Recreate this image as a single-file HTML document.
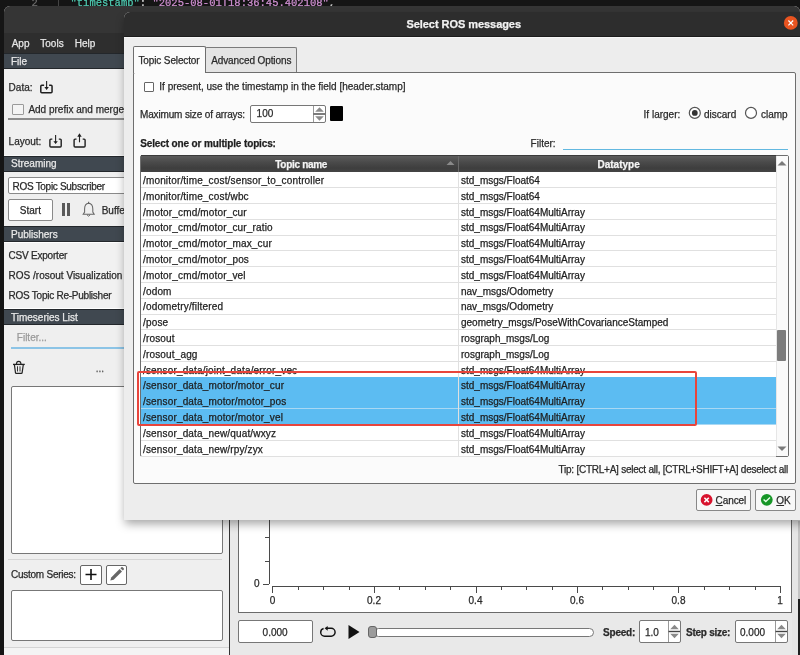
<!DOCTYPE html>
<html><head><meta charset="utf-8"><style>
html,body{margin:0;padding:0;width:800px;height:655px;overflow:hidden;background:#151515}
.a{position:absolute}
.t{position:absolute;white-space:pre;line-height:1;font-family:"Liberation Sans",sans-serif;-webkit-text-stroke:0.25px currentColor}
.mono{font-family:"Liberation Mono",monospace}
</style></head><body><div style="position:absolute;left:0;top:0;width:800px;height:655px;overflow:hidden;filter:blur(0.3px)">
<div class="a" style="left:0px;top:0px;width:800px;height:655px;background:#151515"></div>
<div class="t mono" style="left:31.5px;top:-2.5px;font-size:10.5px;color:#6e6e6e">2</div>
<div class="a" style="left:58px;top:0px;width:1px;height:6px;background:#444"></div>
<div class="t mono" style="left:70.5px;top:-2.5px;font-size:10.5px;color:#d4d4d4"><span style="color:#4ec9b0">"timestamp"</span>: <span style="color:#ce8fd0">"2025-08-01T18:36:45.402108"</span>,</div>
<div class="a" style="left:4px;top:6px;width:796px;height:649px;background:#efefef;border-radius:6px 6px 0 0;overflow:hidden"></div>
<div class="a" style="left:4px;top:6px;width:796px;height:27px;background:#353535;border-radius:6px 6px 0 0"></div>
<div class="a" style="left:4px;top:33px;width:796px;height:20px;background:#2e2e2e"></div>
<div class="t" style="left:11.7px;top:38.53px;font-size:10px;color:#e6e6e6">App</div>
<div class="t" style="left:40.3px;top:38.53px;font-size:10px;color:#e6e6e6">Tools</div>
<div class="t" style="left:74.7px;top:38.53px;font-size:10px;color:#e6e6e6">Help</div>
<div class="a" style="left:4px;top:52.5px;width:226px;height:16.5px;background:#404850;border-top:1px solid #23272b;border-bottom:1px solid #23272b;box-sizing:border-box"></div>
<div class="t" style="left:11px;top:56.53px;font-size:10px;color:#e8e8e8">File</div>
<div class="t" style="left:8.6px;top:82.53px;font-size:10px;color:#2a2a2a">Data:</div>
<svg class="a" style="left:36px;top:78px" width="20" height="18" viewBox="36 78 20 18"><path d="M44.1 85.35 H41.8 Q40.8 85.35 40.8 86.35 V91.75 Q40.8 92.75 41.8 92.75 H51.05 Q52.05 92.75 52.05 91.75 V86.35 Q52.05 85.35 51.05 85.35 H49.1" fill="none" stroke="#1e1e1e" stroke-width="1.5"/><path d="M46.6 81 V88" stroke="#222" stroke-width="1.1"/><path d="M44.4 87 L46.6 89.9 L48.8 87 Z" fill="#1e1e1e"/></svg>
<div class="a" style="left:12px;top:104px;width:10px;height:9px;border:1px solid #9a9a9a;background:#f4f4f4;border-radius:1px"></div>
<div class="t" style="left:28.4px;top:104.53px;font-size:10px;color:#2a2a2a">Add prefix and merge</div>
<div class="a" style="left:8px;top:118px;width:222px;height:2px;background:#8c8c8c"></div>
<div class="t" style="left:8.6px;top:136.53px;font-size:10px;color:#2a2a2a">Layout:</div>
<svg class="a" style="left:46px;top:132px" width="20" height="18" viewBox="46 132 20 18"><path d="M52.3 139.1 H50.9 Q49.9 139.1 49.9 140.1 V146 Q49.9 147 50.9 147 H60.2 Q61.2 147 61.2 146 V140.1 Q61.2 139.1 60.2 139.1 H58.8" fill="none" stroke="#1e1e1e" stroke-width="1.4"/><path d="M55.6 135 V142.5" stroke="#222" stroke-width="1.1"/><path d="M53.4 141.2 L55.6 144 L57.8 141.2 Z" fill="#1e1e1e"/></svg>
<svg class="a" style="left:70px;top:131px" width="20" height="19" viewBox="70 131 20 19"><path d="M76.5 139.1 H75.1 Q74.1 139.1 74.1 140.1 V146 Q74.1 147 75.1 147 H84.1 Q85.1 147 85.1 146 V140.1 Q85.1 139.1 84.1 139.1 H82.7" fill="none" stroke="#1e1e1e" stroke-width="1.4"/><path d="M79.5 142.3 V135.5" stroke="#222" stroke-width="1.1"/><path d="M77.3 136.7 L79.5 133.3 L81.7 136.7 Z" fill="#1e1e1e"/></svg>
<div class="a" style="left:4px;top:155px;width:226px;height:16.5px;background:#fafafa"></div>
<div class="a" style="left:4px;top:155.5px;width:226px;height:16px;background:#404850;border-top:1px solid #23272b;border-bottom:1px solid #23272b;box-sizing:border-box"></div>
<div class="t" style="left:11px;top:158.53px;font-size:10px;color:#e8e8e8">Streaming</div>
<div class="a" style="left:8px;top:177px;width:240px;height:17px;background:#fff;border:1px solid #8a8a8a;border-radius:2px;box-sizing:border-box"></div>
<div class="t" style="left:12.6px;top:181.53px;font-size:10px;color:#2a2a2a;letter-spacing:-0.3px">ROS Topic Subscriber</div>
<div class="a" style="left:8px;top:199px;width:45px;height:22px;background:#fff;border:1px solid #8a8a8a;border-radius:2px;box-sizing:border-box"></div>
<div class="t" style="left:19.8px;top:205.53px;font-size:10px;color:#2a2a2a">Start</div>
<div class="a" style="left:62px;top:203px;width:3.2px;height:12.6px;background:#5a5a5a"></div>
<div class="a" style="left:67px;top:203px;width:3.2px;height:12.6px;background:#5a5a5a"></div>
<svg class="a" style="left:80px;top:200px" width="18" height="20" viewBox="80 200 18 20"><path d="M88.6 203.3 C85.6 203.6 84.6 206 84.6 209 V212 L83.2 214.3 H94.2 L92.8 212 V209 C92.8 206 91.8 203.6 88.6 203.3 Z" fill="none" stroke="#666" stroke-width="1.05"/><path d="M88.6 201.8 V203.3" stroke="#666" stroke-width="1.2"/><path d="M87 214.8 Q88.6 217.6 90.2 214.8" fill="none" stroke="#666" stroke-width="1"/></svg>
<div class="t" style="left:101.7px;top:205.53px;font-size:10px;color:#2a2a2a">Buffer</div>
<div class="a" style="left:4px;top:225.5px;width:226px;height:16px;background:#404850;border-top:1px solid #23272b;border-bottom:1px solid #23272b;box-sizing:border-box"></div>
<div class="t" style="left:11px;top:229.53px;font-size:10px;color:#e8e8e8">Publishers</div>
<div class="a" style="left:4px;top:241.5px;width:226px;height:67.5px;background:#f1f1f1;border-top:1px solid #fff;border-bottom:1.5px solid #fff;box-sizing:border-box"></div>
<div class="t" style="left:8.4px;top:250.53px;font-size:10px;color:#2a2a2a;letter-spacing:-0.2px">CSV Exporter</div>
<div class="t" style="left:8.6px;top:270.54px;font-size:10px;color:#2a2a2a">ROS /rosout Visualization</div>
<div class="t" style="left:8.6px;top:290.54px;font-size:10px;color:#2a2a2a;letter-spacing:-0.25px">ROS Topic Re-Publisher</div>
<div class="a" style="left:4px;top:308.5px;width:226px;height:16.5px;background:#404850;border-top:1px solid #23272b;border-bottom:1px solid #23272b;box-sizing:border-box"></div>
<div class="t" style="left:11px;top:312.54px;font-size:10px;color:#e8e8e8">Timeseries List</div>
<div class="t" style="left:16.8px;top:332.54px;font-size:10px;color:#9a9a9a">Filter...</div>
<div class="a" style="left:10.5px;top:347px;width:212px;height:2px;background:#8cc4e6"></div>
<svg class="a" style="left:10px;top:358px" width="18" height="18" viewBox="10 358 18 18"><path d="M13 364.4 H24.8" stroke="#222" stroke-width="1.3"/><path d="M16.4 364.3 Q16.5 361.4 18.7 361.4 Q20.9 361.4 21 364.3" fill="none" stroke="#222" stroke-width="1.1"/><path d="M14.4 364.6 L15.5 372.9 Q15.6 373.4 16.2 373.4 H21.4 Q22 373.4 22.1 372.9 L23.3 364.6" fill="none" stroke="#222" stroke-width="1.2"/><path d="M17.5 366.3 V371.5 M20 366.3 V371.5" stroke="#333" stroke-width="1"/></svg>
<div class="t" style="left:95.8px;top:363.54px;font-size:10px;color:#555">...</div>
<div class="a" style="left:10.5px;top:386px;width:212px;height:167.5px;background:#fff;border:1px solid #777;border-radius:2px;box-sizing:border-box"></div>
<div class="a" style="left:8px;top:558.5px;width:214px;height:1.5px;background:#d6d6d6"></div>
<div class="t" style="left:11px;top:569.53px;font-size:10px;color:#2a2a2a;letter-spacing:-0.25px">Custom Series:</div>
<div class="a" style="left:80px;top:564.5px;width:21.5px;height:20px;background:#fff;border:1px solid #666;border-radius:2px;box-sizing:border-box"></div>
<svg class="a" style="left:84px;top:568px" width="14" height="13" viewBox="0 0 14 13"><path d="M7 1 V12 M1.5 6.5 H12.5" stroke="#111" stroke-width="1.6"/></svg>
<div class="a" style="left:106px;top:564.5px;width:21px;height:20px;background:#fff;border:1px solid #666;border-radius:2px;box-sizing:border-box"></div>
<svg class="a" style="left:106px;top:564px" width="21" height="21" viewBox="0 0 21 21"><path d="M4.3 16.6 L5.2 13.4 L13.6 5 L16 7.4 L7.6 15.8 Z" fill="#666"/><path d="M14.4 4.2 L15.3 3.3 Q16 2.7 16.7 3.3 L17.7 4.3 Q18.3 5 17.7 5.7 L16.8 6.6 Z" fill="#666"/></svg>
<div class="a" style="left:10.5px;top:589.5px;width:212px;height:51px;background:#fff;border:1px solid #777;border-radius:2px;box-sizing:border-box"></div>
<div class="a" style="left:4px;top:647px;width:225px;height:1px;background:#d4d4d4"></div>
<div class="a" style="left:4px;top:648px;width:225px;height:7px;background:#f4f4f4"></div>
<div class="a" style="left:229px;top:53px;width:1px;height:602px;background:#333"></div>
<div class="a" style="left:230px;top:53px;width:570px;height:602px;background:#e9e9e9"></div>
<div class="a" style="left:237.5px;top:53px;width:554.5px;height:560px;background:#fff;border:1px solid #6a6a6a;box-sizing:border-box"></div>
<div class="a" style="left:269px;top:53px;width:1px;height:531px;background:#4a4a4a"></div>
<div class="a" style="left:265px;top:537px;width:4px;height:1px;background:#4a4a4a"></div>
<div class="a" style="left:265px;top:561px;width:4px;height:1px;background:#4a4a4a"></div>
<div class="a" style="left:263px;top:584px;width:6px;height:1px;background:#4a4a4a"></div>
<div class="t" style="left:254px;top:578.53px;font-size:10px;color:#2a2a2a">0</div>
<div class="a" style="left:272px;top:586px;width:508px;height:1px;background:#4a4a4a"></div>
<div class="a" style="left:272px;top:586px;width:1px;height:7px;background:#4a4a4a"></div>
<div class="a" style="left:298px;top:586px;width:1px;height:4px;background:#4a4a4a"></div>
<div class="a" style="left:323px;top:586px;width:1px;height:4px;background:#4a4a4a"></div>
<div class="a" style="left:349px;top:586px;width:1px;height:4px;background:#4a4a4a"></div>
<div class="a" style="left:374px;top:586px;width:1px;height:7px;background:#4a4a4a"></div>
<div class="a" style="left:399px;top:586px;width:1px;height:4px;background:#4a4a4a"></div>
<div class="a" style="left:425px;top:586px;width:1px;height:4px;background:#4a4a4a"></div>
<div class="a" style="left:450px;top:586px;width:1px;height:4px;background:#4a4a4a"></div>
<div class="a" style="left:476px;top:586px;width:1px;height:7px;background:#4a4a4a"></div>
<div class="a" style="left:501px;top:586px;width:1px;height:4px;background:#4a4a4a"></div>
<div class="a" style="left:526px;top:586px;width:1px;height:4px;background:#4a4a4a"></div>
<div class="a" style="left:552px;top:586px;width:1px;height:4px;background:#4a4a4a"></div>
<div class="a" style="left:577px;top:586px;width:1px;height:7px;background:#4a4a4a"></div>
<div class="a" style="left:602px;top:586px;width:1px;height:4px;background:#4a4a4a"></div>
<div class="a" style="left:628px;top:586px;width:1px;height:4px;background:#4a4a4a"></div>
<div class="a" style="left:653px;top:586px;width:1px;height:4px;background:#4a4a4a"></div>
<div class="a" style="left:678px;top:586px;width:1px;height:7px;background:#4a4a4a"></div>
<div class="a" style="left:704px;top:586px;width:1px;height:4px;background:#4a4a4a"></div>
<div class="a" style="left:729px;top:586px;width:1px;height:4px;background:#4a4a4a"></div>
<div class="a" style="left:755px;top:586px;width:1px;height:4px;background:#4a4a4a"></div>
<div class="a" style="left:780px;top:586px;width:1px;height:7px;background:#4a4a4a"></div>
<div class="t" style="left:269.7px;top:595.53px;font-size:10px;color:#2a2a2a">0</div>
<div class="t" style="left:367.05px;top:595.53px;font-size:10px;color:#2a2a2a">0.2</div>
<div class="t" style="left:468.55px;top:595.53px;font-size:10px;color:#2a2a2a">0.4</div>
<div class="t" style="left:570.05px;top:595.53px;font-size:10px;color:#2a2a2a">0.6</div>
<div class="t" style="left:671.55px;top:595.53px;font-size:10px;color:#2a2a2a">0.8</div>
<div class="t" style="left:777.2px;top:595.53px;font-size:10px;color:#2a2a2a">1</div>
<div class="a" style="left:237.5px;top:620px;width:75px;height:22.5px;background:#fff;border:1px solid #777;border-radius:2px;box-sizing:border-box"></div>
<div class="t" style="left:262.6px;top:627.53px;font-size:10px;color:#2a2a2a">0.000</div>
<svg class="a" style="left:316px;top:621px" width="24" height="20" viewBox="316 621 24 20"><path d="M326.8 628.3 H331.15 A3.95 3.95 0 0 1 331.15 636.2 H324.65 A3.95 3.95 0 0 1 320.7 632.25 A3.95 3.95 0 0 1 323.6 628.45" fill="none" stroke="#111" stroke-width="1.45"/><path d="M324.6 628.3 L327.7 625.9 L327.7 630.7 Z" fill="#111"/></svg>
<svg class="a" style="left:347px;top:624px" width="14" height="16" viewBox="0 0 14 16"><path d="M1.5 1 L12.5 8 L1.5 15 Z" fill="#111"/></svg>
<div class="a" style="left:374px;top:627.5px;width:220px;height:9px;background:#fff;border:1px solid #777;border-radius:5px;box-sizing:border-box"></div>
<div class="a" style="left:368px;top:625.5px;width:8.5px;height:12.2px;background:#9c9c9c;border:1px solid #666;border-radius:3px;box-sizing:border-box"></div>
<div class="t" style="left:603px;top:627.53px;font-size:10px;color:#2a2a2a;font-weight:bold;letter-spacing:-0.2px">Speed:</div>
<div class="a" style="left:639px;top:620px;width:41.5px;height:22.5px;background:#fff;border:1px solid #777;border-radius:2px;box-sizing:border-box"></div>
<div class="t" style="left:644.9px;top:627.53px;font-size:10px;color:#2a2a2a">1.0</div>
<svg class="a" style="left:667.5px;top:621px" width="12" height="21" viewBox="0 0 12 21"><path d="M0.5 0 V21" stroke="#999" stroke-width="1"/><path d="M0.5 10.5 H12" stroke="#444" stroke-width="1.4"/><path d="M2.2 8.3 L6.5 3.7 L10.8 8.3 Z M2.2 12.7 L6.5 17.3 L10.8 12.7 Z" fill="#8a8a8a"/></svg>
<div class="t" style="left:686px;top:627.53px;font-size:10px;color:#2a2a2a;font-weight:bold;letter-spacing:-0.25px">Step size:</div>
<div class="a" style="left:734.5px;top:620px;width:53px;height:22.5px;background:#fff;border:1px solid #777;border-radius:2px;box-sizing:border-box"></div>
<div class="t" style="left:740px;top:627.53px;font-size:10px;color:#2a2a2a">0.000</div>
<svg class="a" style="left:774.5px;top:621px" width="12" height="21" viewBox="0 0 12 21"><path d="M0.5 0 V21" stroke="#999" stroke-width="1"/><path d="M0.5 10.5 H12" stroke="#444" stroke-width="1.4"/><path d="M2.2 8.3 L6.5 3.7 L10.8 8.3 Z M2.2 12.7 L6.5 17.3 L10.8 12.7 Z" fill="#8a8a8a"/></svg>
<div class="a" style="left:792px;top:53px;width:8px;height:602px;background:#e6e6e6"></div>
<div class="a" style="left:798px;top:521px;width:2px;height:78px;background:#c4c4c4"></div>
<div class="a" style="left:798px;top:599px;width:2px;height:56px;background:#1e1e1e"></div>
<div class="a" style="left:124px;top:12px;width:700px;height:508px;box-shadow:0 5px 10px -1px rgba(0,0,0,0.35);border-radius:6px 6px 0 0;background:#ededed"></div>
<div class="a" style="left:124px;top:12px;width:700px;height:25px;background:#2d2d2d;border-radius:6px 6px 0 0"></div>
<div class="a" style="left:124px;top:36px;width:700px;height:1px;background:#1c1c1c"></div>
<div class="a" style="left:124px;top:37px;width:700px;height:1px;background:#f7f7f7"></div>
<div class="t" style="left:406.4px;top:18.69px;font-size:11px;color:#f2f2f2;font-weight:bold;letter-spacing:-0.05px">Select ROS messages</div>
<svg class="a" style="left:782px;top:14px" width="18" height="18" viewBox="782 14 18 18"><circle cx="790.8" cy="22.9" r="6.9" fill="#e95420"/><path d="M788.4 20.5 L793.2 25.3 M793.2 20.5 L788.4 25.3" stroke="#fff" stroke-width="1.2"/></svg>
<div class="a" style="left:132.5px;top:71.5px;width:663px;height:412.5px;background:#fbfbfb;border:1px solid #6e6e6e;border-radius:2px;box-sizing:border-box"></div>
<div class="a" style="left:205px;top:46.5px;width:92px;height:25.5px;background:#e4e4e4;border:1px solid #7a7a7a;border-bottom:none;border-radius:2px 2px 0 0;box-sizing:border-box"></div>
<div class="a" style="left:132.5px;top:45.5px;width:73px;height:27px;background:#fbfbfb;border:1px solid #6e6e6e;border-bottom:none;border-radius:2px 2px 0 0;box-sizing:border-box"></div>
<div class="t" style="left:138.5px;top:55.53px;font-size:10px;color:#2a2a2a;letter-spacing:-0.13px">Topic Selector</div>
<div class="t" style="left:211.2px;top:55.53px;font-size:10px;color:#2a2a2a;letter-spacing:-0.1px">Advanced Options</div>
<div class="a" style="left:143.5px;top:81.5px;width:10.5px;height:10px;background:#fff;border:1px solid #666;border-radius:1px;box-sizing:border-box"></div>
<div class="t" style="left:159.3px;top:81.53px;font-size:10px;color:#2a2a2a">If present, use the timestamp in the field [header.stamp]</div>
<div class="t" style="left:140px;top:109.53px;font-size:10px;color:#2a2a2a;letter-spacing:-0.15px">Maximum size of arrays:</div>
<div class="a" style="left:250px;top:104.5px;width:75.5px;height:18px;background:#fff;border:1px solid #777;border-radius:2px;box-sizing:border-box"></div>
<div class="t" style="left:256.6px;top:108.53px;font-size:10px;color:#2a2a2a">100</div>
<svg class="a" style="left:313px;top:105.5px" width="12" height="16" viewBox="0 0 12 16"><path d="M0.5 0 V16" stroke="#999" stroke-width="1"/><path d="M0.5 8.0 H12" stroke="#444" stroke-width="1.4"/><path d="M2.2 5.8 L6.5 1.2000000000000002 L10.8 5.8 Z M2.2 10.2 L6.5 14.8 L10.8 10.2 Z" fill="#8a8a8a"/></svg>
<div class="a" style="left:330px;top:106px;width:12.5px;height:15px;background:#000;border-radius:1px"></div>
<div class="t" style="left:643.6px;top:109.53px;font-size:10px;color:#2a2a2a">If larger:</div>
<svg class="a" style="left:686px;top:104px" width="18" height="18" viewBox="686 104 18 18"><circle cx="694.8" cy="112.9" r="5.5" fill="#fff" stroke="#555" stroke-width="1.2"/><circle cx="694.8" cy="112.9" r="2.9" fill="#333"/></svg>
<div class="t" style="left:704px;top:109.53px;font-size:10px;color:#2a2a2a">discard</div>
<svg class="a" style="left:742px;top:104px" width="18" height="18" viewBox="742 104 18 18"><circle cx="751" cy="112.9" r="5.5" fill="#fff" stroke="#555" stroke-width="1.2"/></svg>
<div class="t" style="left:761px;top:109.53px;font-size:10px;color:#2a2a2a">clamp</div>
<div class="t" style="left:140.25px;top:138.53px;font-size:10px;color:#1e1e1e;font-weight:bold;letter-spacing:-0.13px">Select one or multiple topics:</div>
<div class="t" style="left:530.6px;top:138.53px;font-size:10px;color:#2a2a2a">Filter:</div>
<div class="a" style="left:563px;top:148.5px;width:225px;height:1.3px;background:#62b8e0"></div>
<div class="a" style="left:140px;top:154.5px;width:648.5px;height:302.5px;background:#fff;border:1px solid #6e6e6e;border-radius:2px;box-sizing:border-box"></div>
<div class="a" style="left:141px;top:155.5px;width:634.5px;height:16.5px;background:linear-gradient(#5c5c5c,#4a4a4a 40%,#3e3e3e 75%,#444)"></div>
<div class="a" style="left:141px;top:155px;width:634.5px;height:1px;background:#3a3a3a"></div>
<div class="a" style="left:458px;top:155.5px;width:1px;height:16.5px;background:#6a6a6a"></div>
<div class="t" style="left:275.3px;top:159.53px;font-size:10px;color:#f4f4f4;font-weight:bold;letter-spacing:-0.3px">Topic name</div>
<div class="t" style="left:597.5px;top:159.53px;font-size:10px;color:#f4f4f4;font-weight:bold">Datatype</div>
<svg class="a" style="left:446px;top:160px" width="9" height="6" viewBox="0 0 9 6"><path d="M0.5 5 L4.5 1 L8.5 5 Z" fill="#8a8a8a"/></svg>
<div class="a" style="left:141px;top:187.10000000000002px;width:634.5px;height:1px;background:#e0e0e0"></div>
<div class="t" style="left:143px;top:176.03px;font-size:10px;color:#1e1e1e;letter-spacing:0.16px">/monitor/time_cost/sensor_to_controller</div>
<div class="t" style="left:461px;top:176.03px;font-size:10px;color:#1e1e1e">std_msgs/Float64</div>
<div class="a" style="left:141px;top:202.90000000000003px;width:634.5px;height:1px;background:#e0e0e0"></div>
<div class="t" style="left:143px;top:191.84px;font-size:10px;color:#1e1e1e;letter-spacing:0.16px">/monitor/time_cost/wbc</div>
<div class="t" style="left:461px;top:191.84px;font-size:10px;color:#1e1e1e">std_msgs/Float64</div>
<div class="a" style="left:141px;top:218.70000000000002px;width:634.5px;height:1px;background:#e0e0e0"></div>
<div class="t" style="left:143px;top:207.63px;font-size:10px;color:#1e1e1e;letter-spacing:0.16px">/motor_cmd/motor_cur</div>
<div class="t" style="left:461px;top:207.63px;font-size:10px;color:#1e1e1e">std_msgs/Float64MultiArray</div>
<div class="a" style="left:141px;top:234.50000000000003px;width:634.5px;height:1px;background:#e0e0e0"></div>
<div class="t" style="left:143px;top:223.44px;font-size:10px;color:#1e1e1e;letter-spacing:0.16px">/motor_cmd/motor_cur_ratio</div>
<div class="t" style="left:461px;top:223.44px;font-size:10px;color:#1e1e1e">std_msgs/Float64MultiArray</div>
<div class="a" style="left:141px;top:250.3px;width:634.5px;height:1px;background:#e0e0e0"></div>
<div class="t" style="left:143px;top:239.23px;font-size:10px;color:#1e1e1e;letter-spacing:0.16px">/motor_cmd/motor_max_cur</div>
<div class="t" style="left:461px;top:239.23px;font-size:10px;color:#1e1e1e">std_msgs/Float64MultiArray</div>
<div class="a" style="left:141px;top:266.1px;width:634.5px;height:1px;background:#e0e0e0"></div>
<div class="t" style="left:143px;top:255.03px;font-size:10px;color:#1e1e1e;letter-spacing:0.16px">/motor_cmd/motor_pos</div>
<div class="t" style="left:461px;top:255.03px;font-size:10px;color:#1e1e1e">std_msgs/Float64MultiArray</div>
<div class="a" style="left:141px;top:281.90000000000003px;width:634.5px;height:1px;background:#e0e0e0"></div>
<div class="t" style="left:143px;top:270.84px;font-size:10px;color:#1e1e1e;letter-spacing:0.16px">/motor_cmd/motor_vel</div>
<div class="t" style="left:461px;top:270.84px;font-size:10px;color:#1e1e1e">std_msgs/Float64MultiArray</div>
<div class="a" style="left:141px;top:297.70000000000005px;width:634.5px;height:1px;background:#e0e0e0"></div>
<div class="t" style="left:143px;top:286.64px;font-size:10px;color:#1e1e1e;letter-spacing:0.16px">/odom</div>
<div class="t" style="left:461px;top:286.64px;font-size:10px;color:#1e1e1e">nav_msgs/Odometry</div>
<div class="a" style="left:141px;top:313.50000000000006px;width:634.5px;height:1px;background:#e0e0e0"></div>
<div class="t" style="left:143px;top:302.44px;font-size:10px;color:#1e1e1e;letter-spacing:0.16px">/odometry/filtered</div>
<div class="t" style="left:461px;top:302.44px;font-size:10px;color:#1e1e1e">nav_msgs/Odometry</div>
<div class="a" style="left:141px;top:329.3px;width:634.5px;height:1px;background:#e0e0e0"></div>
<div class="t" style="left:143px;top:318.24px;font-size:10px;color:#1e1e1e;letter-spacing:0.16px">/pose</div>
<div class="t" style="left:461px;top:318.24px;font-size:10px;color:#1e1e1e">geometry_msgs/PoseWithCovarianceStamped</div>
<div class="a" style="left:141px;top:345.1px;width:634.5px;height:1px;background:#e0e0e0"></div>
<div class="t" style="left:143px;top:334.04px;font-size:10px;color:#1e1e1e;letter-spacing:0.16px">/rosout</div>
<div class="t" style="left:461px;top:334.04px;font-size:10px;color:#1e1e1e">rosgraph_msgs/Log</div>
<div class="a" style="left:141px;top:360.90000000000003px;width:634.5px;height:1px;background:#e0e0e0"></div>
<div class="t" style="left:143px;top:349.84px;font-size:10px;color:#1e1e1e;letter-spacing:0.16px">/rosout_agg</div>
<div class="t" style="left:461px;top:349.84px;font-size:10px;color:#1e1e1e">rosgraph_msgs/Log</div>
<div class="a" style="left:141px;top:376.70000000000005px;width:634.5px;height:1px;background:#e0e0e0"></div>
<div class="t" style="left:143px;top:365.64px;font-size:10px;color:#1e1e1e;letter-spacing:0.16px">/sensor_data/joint_data/error_vec</div>
<div class="t" style="left:461px;top:365.64px;font-size:10px;color:#1e1e1e">std_msgs/Float64MultiArray</div>
<div class="a" style="left:141px;top:377.20000000000005px;width:634.5px;height:15.8px;background:#5cbcf2"></div>
<div class="a" style="left:141px;top:392.50000000000006px;width:634.5px;height:1px;background:#a9d8f3"></div>
<div class="t" style="left:143px;top:381.44px;font-size:10px;color:#1e1e1e;letter-spacing:0.16px">/sensor_data_motor/motor_cur</div>
<div class="t" style="left:461px;top:381.44px;font-size:10px;color:#1e1e1e">std_msgs/Float64MultiArray</div>
<div class="a" style="left:141px;top:393.0px;width:634.5px;height:15.8px;background:#5cbcf2"></div>
<div class="a" style="left:141px;top:408.3px;width:634.5px;height:1px;background:#a9d8f3"></div>
<div class="t" style="left:143px;top:397.24px;font-size:10px;color:#1e1e1e;letter-spacing:0.16px">/sensor_data_motor/motor_pos</div>
<div class="t" style="left:461px;top:397.24px;font-size:10px;color:#1e1e1e">std_msgs/Float64MultiArray</div>
<div class="a" style="left:141px;top:408.8px;width:634.5px;height:15.8px;background:#5cbcf2"></div>
<div class="a" style="left:141px;top:424.1px;width:634.5px;height:1px;background:#a9d8f3"></div>
<div class="t" style="left:143px;top:413.04px;font-size:10px;color:#1e1e1e;letter-spacing:0.16px">/sensor_data_motor/motor_vel</div>
<div class="t" style="left:461px;top:413.04px;font-size:10px;color:#1e1e1e">std_msgs/Float64MultiArray</div>
<div class="a" style="left:141px;top:439.90000000000003px;width:634.5px;height:1px;background:#e0e0e0"></div>
<div class="t" style="left:143px;top:428.84px;font-size:10px;color:#1e1e1e;letter-spacing:0.16px">/sensor_data_new/quat/wxyz</div>
<div class="t" style="left:461px;top:428.84px;font-size:10px;color:#1e1e1e">std_msgs/Float64MultiArray</div>
<div class="a" style="left:141px;top:455.70000000000005px;width:634.5px;height:1px;background:#e0e0e0"></div>
<div class="t" style="left:143px;top:444.64px;font-size:10px;color:#1e1e1e;letter-spacing:0.16px">/sensor_data_new/rpy/zyx</div>
<div class="t" style="left:461px;top:444.64px;font-size:10px;color:#1e1e1e">std_msgs/Float64MultiArray</div>
<div class="a" style="left:458.3px;top:172px;width:1px;height:284px;background:#e0e0e0"></div>
<div class="a" style="left:775.5px;top:155.5px;width:12px;height:300px;background:#fafafa;border-left:1px solid #e6e6e6;box-sizing:border-box"></div>
<svg class="a" style="left:777px;top:160px" width="10" height="6" viewBox="0 0 10 6"><path d="M0.5 5.5 L5 1 L9.5 5.5 Z" fill="#7a7a7a"/></svg>
<svg class="a" style="left:777px;top:446px" width="10" height="6" viewBox="0 0 10 6"><path d="M0.5 0.5 L5 5 L9.5 0.5 Z" fill="#7a7a7a"/></svg>
<div class="a" style="left:777.3px;top:330px;width:8.7px;height:30.5px;background:#7c7c7c;border-radius:1px"></div>
<div class="a" style="left:136.5px;top:370.5px;width:560.5px;height:55.5px;border:2px solid #e8453c;border-radius:2px;box-sizing:border-box"></div>
<div class="t" style="left:558.5px;top:464.54px;font-size:10px;color:#2a2a2a;letter-spacing:-0.24px">Tip: [CTRL+A] select all, [CTRL+SHIFT+A] deselect all</div>
<div class="a" style="left:695.5px;top:489px;width:55.5px;height:22px;background:#f8f8f8;border:1px solid #888;border-radius:2px;box-sizing:border-box"></div>
<svg class="a" style="left:699px;top:492px" width="16" height="16" viewBox="699 492 16 16"><circle cx="706.6" cy="499.9" r="5.9" fill="#d8142e"/><path d="M704.4 497.7 L708.8 502.1 M708.8 497.7 L704.4 502.1" stroke="#fff" stroke-width="1.5"/></svg>
<div class="t" style="left:715.6px;top:495.54px;font-size:10px;color:#2a2a2a;letter-spacing:-0.1px"><u>C</u>ancel</div>
<div class="a" style="left:755px;top:489px;width:41px;height:22px;background:#f8f8f8;border:1px solid #888;border-radius:2px;box-sizing:border-box"></div>
<svg class="a" style="left:759px;top:492px" width="16" height="16" viewBox="759 492 16 16"><circle cx="766.8" cy="499.8" r="5.9" fill="#179627"/><path d="M763.6 499.4 L765.8 501.6 L770 497.6" fill="none" stroke="#e6ffe6" stroke-width="1.4"/></svg>
<div class="t" style="left:776.3px;top:495.54px;font-size:10px;color:#2a2a2a"><u>O</u>K</div>
</div></body></html>
